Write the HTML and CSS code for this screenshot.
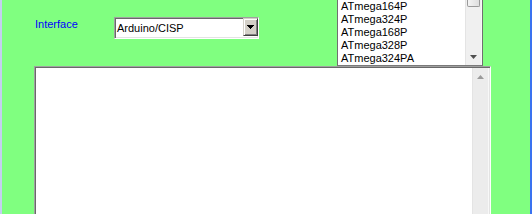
FILE: index.html
```html
<html>
<head>
  <title>AVR Programmer</title>
  <link rel="stylesheet" href="styles.css">
</head>
<body>
  <div class="form">
    <div class="top-row">
      <span class="field-label">Interface</span>
      <div class="combo">
        <span class="combo-text">Arduino/CISP</span>
        <span class="combo-button">
          <svg width="7" height="4" shape-rendering="crispEdges"><path d="M0 0h7L3.5 4z" fill="#000"/></svg>
        </span>
      </div>
      <div class="listbox">
        <ul class="listbox-items">
          <li>ATmega164P</li>
          <li>ATmega324P</li>
          <li>ATmega168P</li>
          <li>ATmega328P</li>
          <li>ATmega324PA</li>
        </ul>
        <div class="scrollbar list-scroll">
          <div class="thumb"></div>
          <div class="scroll-button">
            <svg width="7" height="4"><path d="M0 0h7L3.5 4z" fill="#505050"/></svg>
          </div>
        </div>
      </div>
    </div>
    <!-- 日志输出框 -->
    <div class="memo">
      <div class="memo-text"></div>
      <div class="scrollbar memo-scroll">
        <div class="scroll-button">
          <svg width="7" height="4"><path d="M0 4h7L3.5 0z" fill="#9a9a9a"/></svg>
        </div>
      </div>
    </div>
  </div>
</body>
</html>
```

FILE: styles.css
```css
html, body {
  margin: 0;
  height: 100%;
}

body {
  background-color: #80ff80;
  border-left: 2px solid #c4cff0;
  border-right: 2px solid #3a72f0;
  overflow: hidden;
  font-family: "Liberation Sans", Arial, sans-serif;
  font-size: 11px;
}

.form {
  padding-left: 32px;
}

.top-row {
  display: flex;
  align-items: flex-start;
  height: 66px;
}

.field-label {
  color: #0000ff;
  width: 79px;
  margin-left: 1px;
  margin-top: 18px;
  line-height: 13px;
  flex-shrink: 0;
}

/* 下拉框 */
.combo {
  width: 145px;
  height: 22px;
  margin-top: 17px;
  box-sizing: border-box;
  padding: 1px;
  border: 1px solid;
  border-color: #a0a0a0 #fff #fff #a0a0a0;
  background: #fff;
  box-shadow: inset 1px 1px 0 #696969, inset -1px -1px 0 #e3e3e3;
  display: flex;
  flex-shrink: 0;
}

.combo-text {
  flex: 1;
  line-height: 13px;
  padding: 3px 0 0 1px;
  color: #000;
}

.combo-button {
  width: 15px;
  height: 18px;
  box-sizing: border-box;
  margin-top: -1px;
  margin-right: -1px;
  background: #d4d0c8;
  border: 1px solid;
  border-color: #d4d0c8 #404040 #404040 #d4d0c8;
  box-shadow: inset 1px 1px 0 #fff, inset -1px -1px 0 #808080;
  display: flex;
  align-items: center;
  justify-content: center;
}

/* 芯片列表 */
.listbox {
  margin-left: 78px;
  margin-top: -1px;
  width: 146px;
  height: 67px;
  box-sizing: border-box;
  border: 1px solid #6f6f6f;
  border-bottom-color: #7a7a7a;
  background: #fff;
  display: flex;
  flex-shrink: 0;
}

.listbox-items {
  list-style: none;
  margin: 0;
  padding: 0 0 0 3px;
  flex: 1;
  overflow: hidden;
}

.listbox-items li {
  height: 13px;
  line-height: 13px;
  white-space: nowrap;
  color: #000;
}

.scrollbar {
  width: 17px;
  box-sizing: border-box;
  background: #f0f0f0;
  border-left: 1px solid #e4e4e4;
  border-right: 1px solid #f8f8f8;
  display: flex;
  flex-direction: column;
  justify-content: space-between;
}

.thumb {
  height: 7px;
  margin: 0 1px;
  box-sizing: border-box;
  border: 1px solid #9a9a9a;
  border-top: none;
  border-radius: 0 0 2px 2px;
  background: linear-gradient(to right, #f4f4f4, #dedede);
}

.scroll-button {
  height: 17px;
  display: flex;
  align-items: center;
  justify-content: center;
}

/* 输出框 */
.memo {
  width: 457px;
  height: 170px;
  box-sizing: border-box;
  padding: 1px;
  border: 1px solid;
  border-color: #a0a0a0 #fff #fff #a0a0a0;
  background: #fff;
  box-shadow: inset 1px 1px 0 #696969, inset -1px -1px 0 #e3e3e3;
  display: flex;
}

.memo-text {
  flex: 1;
}

.memo-scroll {
  justify-content: flex-start;
  background: #ececec;
}
```
